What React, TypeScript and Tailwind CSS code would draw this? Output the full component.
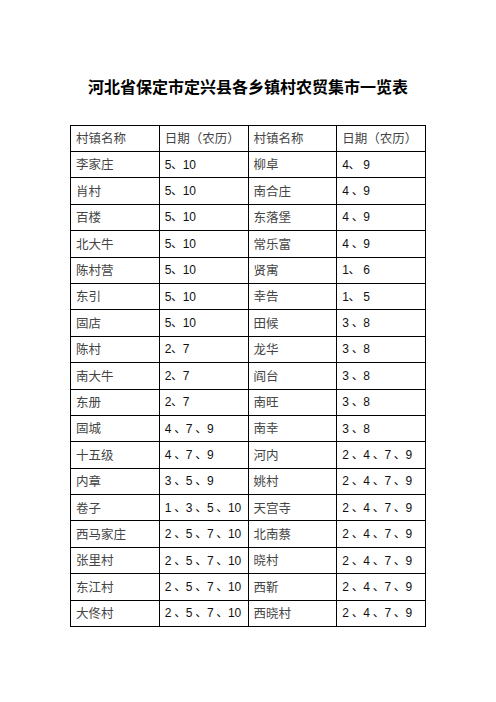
const rows: [string, string, string, string][] = [
  ["李家庄", "5、10", "柳卓", "4、 9"],
  ["肖村", "5、10", "南合庄", "4 、9"],
  ["百楼", "5、10", "东落堡", "4 、9"],
  ["北大牛", "5、10", "常乐富", "4 、9"],
  ["陈村营", "5、10", "贤寓", "1、 6"],
  ["东引", "5、10", "幸告", "1、 5"],
  ["固店", "5、10", "田候", "3 、8"],
  ["陈村", "2、7", "龙华", "3 、8"],
  ["南大牛", "2、7", "阎台", "3 、8"],
  ["东册", "2、7", "南旺", "3 、8"],
  ["固城", "4 、7 、9", "南幸", "3 、8"],
  ["十五级", "4 、7 、9", "河内", "2 、4 、7 、9"],
  ["内章", "3 、5 、9", "姚村", "2 、4 、7 、9"],
  ["卷子", "1 、3 、5 、10", "天宫寺", "2 、4 、7 、9"],
  ["西马家庄", "2 、5 、7 、10", "北南蔡", "2 、4 、7 、9"],
  ["张里村", "2 、5 、7 、10", "晓村", "2 、4 、7 、9"],
  ["东江村", "2 、5 、7 、10", "西靳", "2 、4 、7 、9"],
  ["大佟村", "2 、5 、7 、10", "西晓村", "2 、4 、7 、9"],
];

const cjk = "font-['Noto_Sans_CJK_SC',sans-serif]";
const num = "font-['Liberation_Sans','Noto_Sans_CJK_SC',sans-serif]";

export default function App() {
  return (
    <main className="w-[496px] h-[702px] bg-white pt-[76px]">
      <h1 className={`text-center text-[16px] leading-[20px] font-bold text-black ${cjk}`}>
        河北省保定市定兴县各乡镇村农贸集市一览表
      </h1>

      <table className="mt-[29px] ml-[70px] w-[356px] table-fixed border-collapse">
        <tbody>
          <tr className="h-[26px]">
            <td className={`border border-black pl-[5px] text-[12.5px] text-[#444] ${cjk}`}>村镇名称</td>
            <td className={`border border-black pl-[5px] text-[12.5px] text-[#444] ${cjk}`}>日期（农历）</td>
            <td className={`border border-black pl-[5px] text-[12.5px] text-[#444] ${cjk}`}>村镇名称</td>
            <td className={`border border-black pl-[5px] text-[12.5px] text-[#444] ${cjk}`}>日期（农历）</td>
          </tr>
          {rows.map((r) => (
            <tr key={r[0]} className="h-[26.4px]">
              <td className={`border border-black pl-[5px] text-[12.5px] leading-none text-[#444] ${cjk}`}>{r[0]}</td>
              <td className={`border border-black pl-[5px] text-[12px] leading-none tracking-[-0.3px] whitespace-pre text-[#111] ${num}`}>{r[1]}</td>
              <td className={`border border-black pl-[5px] text-[12.5px] leading-none text-[#444] ${cjk}`}>{r[2]}</td>
              <td className={`border border-black pl-[5px] text-[12px] leading-none tracking-[-0.3px] whitespace-pre text-[#111] ${num}`}>{r[3]}</td>
            </tr>
          ))}
        </tbody>
      </table>
    </main>
  );
}
